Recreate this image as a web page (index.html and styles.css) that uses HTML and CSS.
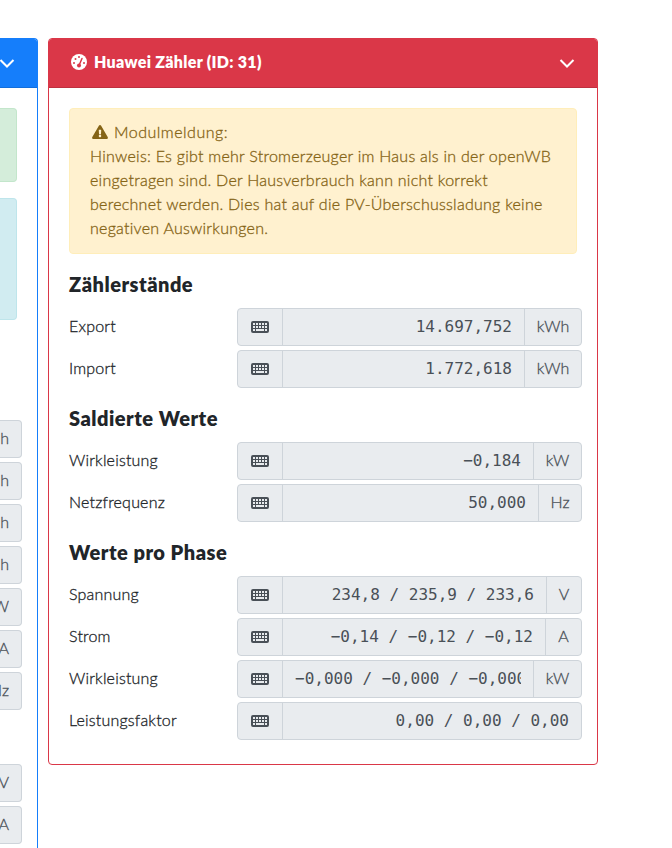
FILE: index.html
```html
<!DOCTYPE html>
<html lang="de">
<head>
    <meta charset="UTF-8">
    <title>Status</title>
    <link rel="stylesheet" href="styles.css">
</head>
<body>
<svg class="sprite" xmlns="http://www.w3.org/2000/svg">
    <symbol id="keyboard" viewBox="0 0 18 12">
        <path fill-rule="evenodd" d="M2 0h14a2 2 0 0 1 2 2v8a2 2 0 0 1-2 2H2a2 2 0 0 1-2-2V2a2 2 0 0 1 2-2zM2 2v2h2v-2zM5 2v2h2v-2zM8 2v2h2v-2zM11 2v2h2v-2zM14 2v2h2v-2zM2 5v2h2v-2zM5 5v2h2v-2zM8 5v2h2v-2zM11 5v2h2v-2zM14 5v2h2v-2zM2 8v2h2v-2zM5 8v2h8v-2zM14 8v2h2v-2z"/>
    </symbol>
    <symbol id="chevron" viewBox="0 0 16 16">
        <path d="M1.500 5L8 11.500L14.500 5" fill="none" stroke="currentColor" stroke-width="2"/>
    </symbol>
</svg>
<div class="deck">
    <div class="card card-blue">
        <div class="card-header">
            <svg class="chevron"><use href="#chevron"/></svg>
        </div>
        <div class="card-body">
            <div class="alert alert-success"></div>
            <div class="alert alert-info"></div>
            <div class="units">
                <div class="unit">h</div>
                <div class="unit">h</div>
                <div class="unit">h</div>
                <div class="unit">h</div>
                <div class="unit">W</div>
                <div class="unit">A</div>
                <div class="unit">Hz</div>
            </div>
            <div class="units">
                <div class="unit">V</div>
                <div class="unit">A</div>
            </div>
        </div>
    </div>

    <div class="card card-red">
        <div class="card-header">
            <svg class="gauge" viewBox="0 0 16 16">
                <circle cx="8" cy="8" r="8" fill="#fff"/>
                <g fill="#da3748">
                    <circle cx="3" cy="9" r="1"/>
                    <circle cx="4.500" cy="5" r="1"/>
                    <circle cx="8" cy="3" r="1"/>
                    <circle cx="13" cy="9" r="1"/>
                    <circle cx="8" cy="11.500" r="2"/>
                </g>
                <path d="M8 11.500L11 4.500" stroke="#da3748" stroke-width="1.500" stroke-linecap="round"/>
            </svg>
            <span class="title">Huawei Zähler (ID: 31)</span>
            <svg class="chevron"><use href="#chevron"/></svg>
        </div>
        <div class="card-body">
            <div class="alert alert-warning">
                <div class="first"><svg class="warn" viewBox="0 0 576 512"><path d="M569.517 440.013C587.975 472.007 564.806 512 527.94 512H48.054c-36.937 0-59.999-40.055-41.577-71.987L246.423 23.985c18.467-32.009 64.72-31.951 83.154 0l239.94 416.028zM288 354c-25.405 0-46 20.595-46 46s20.595 46 46 46 46-20.595 46-46-20.595-46-46-46zm-43.673-165.346l7.418 136c.347 6.364 5.609 11.346 11.982 11.346h48.546c6.373 0 11.635-4.982 11.982-11.346l7.418-136c.375-6.874-5.098-12.654-11.982-12.654h-63.383c-6.884 0-12.356 5.780-11.981 12.654z"/></svg>Modulmeldung:</div>
                <div>Hinweis: Es gibt mehr Stromerzeuger im Haus als in der openWB</div>
                <div>eingetragen sind. Der Hausverbrauch kann nicht korrekt</div>
                <div>berechnet werden. Dies hat auf die PV-Überschussladung keine</div>
                <div>negativen Auswirkungen.</div>
            </div>

            <h2>Zählerstände</h2>
            <div class="rows">
                <div class="row">
                    <label>Export</label>
                    <div class="group">
                        <div class="icon"><svg class="keyboard"><use href="#keyboard"/></svg></div>
                        <div class="value"><div>14.697,752</div></div>
                        <div class="unit unit-kwh">kWh</div>
                    </div>
                </div>
                <div class="row">
                    <label>Import</label>
                    <div class="group">
                        <div class="icon"><svg class="keyboard"><use href="#keyboard"/></svg></div>
                        <div class="value"><div>1.772,618</div></div>
                        <div class="unit unit-kwh">kWh</div>
                    </div>
                </div>
            </div>

            <h2>Saldierte Werte</h2>
            <div class="rows">
                <div class="row">
                    <label>Wirkleistung</label>
                    <div class="group">
                        <div class="icon"><svg class="keyboard"><use href="#keyboard"/></svg></div>
                        <div class="value"><div>−0,184</div></div>
                        <div class="unit unit-kw">kW</div>
                    </div>
                </div>
                <div class="row">
                    <label>Netzfrequenz</label>
                    <div class="group">
                        <div class="icon"><svg class="keyboard"><use href="#keyboard"/></svg></div>
                        <div class="value"><div>50,000</div></div>
                        <div class="unit unit-hz">Hz</div>
                    </div>
                </div>
            </div>

            <h2>Werte pro Phase</h2>
            <div class="rows">
                <div class="row">
                    <label>Spannung</label>
                    <div class="group">
                        <div class="icon"><svg class="keyboard"><use href="#keyboard"/></svg></div>
                        <div class="value"><div>234,8 / 235,9 / 233,6</div></div>
                        <div class="unit unit-v">V</div>
                    </div>
                </div>
                <div class="row">
                    <label>Strom</label>
                    <div class="group">
                        <div class="icon"><svg class="keyboard"><use href="#keyboard"/></svg></div>
                        <div class="value"><div>−0,14 / −0,12 / −0,12</div></div>
                        <div class="unit unit-a">A</div>
                    </div>
                </div>
                <div class="row">
                    <label>Wirkleistung</label>
                    <div class="group">
                        <div class="icon"><svg class="keyboard"><use href="#keyboard"/></svg></div>
                        <div class="value"><div>−0,000 / −0,000 / −0,000</div></div>
                        <div class="unit unit-kw">kW</div>
                    </div>
                </div>
                <div class="row">
                    <label>Leistungsfaktor</label>
                    <div class="group">
                        <div class="icon"><svg class="keyboard"><use href="#keyboard"/></svg></div>
                        <div class="value"><div>0,00 / 0,00 / 0,00</div></div>
                    </div>
                </div>
            </div>
        </div>
    </div>
</div>
</body>
</html>
```
FILE: styles.css
```css
* {
    box-sizing: border-box;
}

html {
    overflow: hidden;
}

body {
    margin: 0;
    height: 848px;
    overflow: hidden;
    background: #fff;
    color: #212529;
    font: 300 16px/24px Lato, "Liberation Sans", sans-serif;
    font-variant-ligatures: none;
}

.sprite {
    display: none;
}

.deck {
    display: flex;
    align-items: flex-start;
    gap: 10px;
    height: 848px;
    padding-top: 38px;
    overflow: hidden;
}

.card {
    flex: none;
    border: 1px solid;
    border-radius: 4px;
    overflow: hidden;
}

.card-header {
    display: flex;
    align-items: center;
    height: 49px;
    padding: 0 22px;
    border-bottom: 1px solid rgba(0, 0, 0, .125);
    color: #fff;
}

.chevron {
    width: 16px;
    height: 16px;
    margin-left: auto;
}

.alert {
    border: 1px solid;
    border-radius: 4px;
}

/* left card, only its right edge is in view */
.card-blue {
    width: 38px;
    height: 810px;
    border-color: #157efb;
    border-width: 1px 1px 0 0;
    border-radius: 0 4px 0 0;
}

.card-blue .card-header {
    justify-content: flex-end;
    padding-left: 0;
    background: #157efb;
}

.card-blue .chevron {
    flex: none;
}

.card-blue .card-body {
    width: 22px;
    padding-top: 20px;
}

.card-blue .alert {
    width: 17px;
    border-left: 0;
    border-radius: 0 4px 4px 0;
}

.alert-success {
    height: 74px;
    margin-bottom: 16px;
    border-color: #c3e6cb;
    background: #d4edda;
}

.alert-info {
    height: 122px;
    margin-bottom: 100px;
    border-color: #bee5eb;
    background: #d1ecf1;
}

.units {
    display: grid;
    grid-template-columns: 22px;
    gap: 4px;
    margin-bottom: 54px;
}

.units .unit {
    justify-content: flex-end;
    height: 38px;
    padding-right: 12px;
    border: 1px solid #ced4da;
    border-left: 0;
    border-radius: 0 4px 4px 0;
    background: #e9ecef;
    overflow: hidden;
}

/* right card */
.card-red {
    width: 550px;
    height: 727px;
    border-color: #da3748;
}

.card-red .card-header {
    background: #da3748;
}

.card-red .card-body {
    padding: 20px;
}

.gauge {
    width: 16px;
    height: 16px;
    margin-right: 7px;
    margin-bottom: 2px;
}

.title {
    padding-bottom: 2px;
    font-weight: 800;
    letter-spacing: .3px;
}

.alert-warning {
    padding: 11px 20px 13px;
    border-color: #ffeeba;
    background: #fff1cf;
    color: #856416;
    letter-spacing: .26px;
    white-space: nowrap;
}

/* light weight is a bit thin at 16px */
.alert-warning,
label,
.unit {
    -webkit-text-stroke: .3px currentColor;
}

.first {
    display: flex;
    align-items: center;
    letter-spacing: .5px;
}

.warn {
    width: 16px;
    height: 14px;
    margin: 0 6px 0 2px;
    fill: currentColor;
}

h2 {
    margin: 18px 0 12px;
    font-size: 20px;
    line-height: 24px;
    font-weight: 800;
    letter-spacing: .5px;
}

.rows {
    display: grid;
    gap: 4px;
    width: 513px;
}

.row {
    display: grid;
    grid-template-columns: 168px 345px;
    align-items: center;
}

label {
    padding-bottom: 2px;
    letter-spacing: .2px;
}

.group {
    display: flex;
    height: 38px;
    border: 1px solid #ced4da;
    border-radius: 4px;
    background: #e9ecef;
    color: #495057;
}

.icon {
    display: flex;
    flex: none;
    align-items: center;
    justify-content: center;
    width: 45px;
    border-right: 1px solid #ced4da;
}

.keyboard {
    width: 18px;
    height: 12px;
    fill: currentColor;
}

.value {
    flex: 1;
    min-width: 0;
    padding: 6px 12px;
    font-family: "DejaVu Sans Mono", monospace;
}

.value div {
    overflow: hidden;
    white-space: nowrap;
    text-align: right;
}

.unit {
    display: flex;
    flex: none;
    align-items: center;
    justify-content: center;
    padding-bottom: 2px;
    color: #495057;
}

.group .unit {
    border-left: 1px solid #ced4da;
}

.unit-kwh {
    width: 57px;
}

.unit-kw {
    width: 48px;
}

.unit-hz {
    width: 43px;
}

.unit-v {
    width: 35px;
}

.unit-a {
    width: 36px;
}
```
